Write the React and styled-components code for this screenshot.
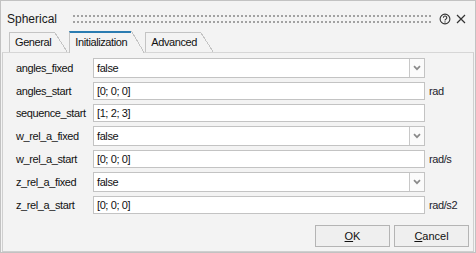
import React from 'react'
import styled, { createGlobalStyle } from 'styled-components'

const GlobalStyle = createGlobalStyle`
  html, body {
    margin: 0;
    padding: 0;
    background: #f3f3f3;
  }
  * {
    box-sizing: border-box;
  }
`

const Window = styled.div`
  width: 476px;
  height: 253px;
  border: 1px solid #c2c2c2;
  background: #f3f3f3;
  display: flex;
  flex-direction: column;
  font-family: "Liberation Sans", Arial, sans-serif;
  color: #111;
`

const TitleBar = styled.div`
  height: 30px;
  padding: 5px 9px 0 6px;
  display: flex;
  align-items: center;
`

const Title = styled.div`
  font-size: 12px;
  line-height: 14px;
  color: #1a1a1a;
`

const Gripper = styled.div`
  flex: 1;
  height: 8px;
  margin: 0 8px 0 16px;
  background-image:
    linear-gradient(to right, transparent 2px, #f3f3f3 2px),
    linear-gradient(to bottom, #a2a2a2 2px, transparent 2px);
  background-size: 4px 6px;
`

const IconButton = styled.div`
  width: ${p => p.$size}px;
  height: ${p => p.$size}px;
  margin-left: ${p => p.$gap || 0}px;
  display: flex;
  align-items: center;
  justify-content: center;
`

const TabStrip = styled.div`
  height: 22px;
  margin-bottom: -1px;
  padding-left: 8px;
  display: flex;
  align-items: flex-end;
  position: relative;
  z-index: 1;
`

const Tab = styled.div`
  position: relative;
  align-self: ${p => (p.$active ? 'stretch' : 'flex-start')};
  height: ${p => (p.$active ? 22 : 20)}px;
  margin-top: ${p => (p.$active ? 0 : 1)}px;
  padding: 2px ${p => (p.$active ? 4 : 3)}px 0 5px;
  margin-right: ${p => (p.$active ? 14 : 15)}px;
  border-left: 1px solid #c4c4c4;
  border-top: ${p => (p.$active ? '2px solid #2b7cb1' : '1px solid #c4c4c4')};
  background: #f3f3f3;
  z-index: ${p => (p.$active ? 2 : 1)};
  font-size: 11px;
  line-height: 14px;
  letter-spacing: -0.4px;
  white-space: nowrap;

  &::after {
    content: '';
    position: absolute;
    top: ${p => (p.$active ? -2 : -1)}px;
    bottom: 0;
    right: -13px;
    width: 13px;
    background: linear-gradient(
      to bottom left,
      transparent calc(50% - 0.8px),
      #c4c4c4 calc(50% - 0.8px),
      #c4c4c4 calc(50% + 0.2px),
      #f3f3f3 calc(50% + 0.2px)
    );
  }
`

const Panel = styled.div`
  flex: 1;
  margin: 0 1px;
  border: 1px solid #cfcfcf;
  border-top-color: #d6d6d6;
  display: flex;
  flex-direction: column;
  padding: 3px 4px 4px 13px;
`

const Form = styled.div`
  display: flex;
  flex-direction: column;
`

const Row = styled.div`
  display: grid;
  grid-template-columns: 77px 332px auto;
  align-items: center;
  height: ${p => (p.$tall ? 24 : 22)}px;
  font-size: 11px;
  letter-spacing: -0.4px;
`

const Label = styled.div`
  white-space: nowrap;
  color: #111;
`

const Unit = styled.div`
  padding-left: 4px;
  color: #1c1c2c;
`

const TextBox = styled.div`
  height: 18px;
  border: 1px solid #c3c3c3;
  background: #fff;
  padding-left: 3px;
  line-height: 16px;
`

const Select = styled.div`
  height: 20px;
  border: 1px solid #c3c3c3;
  background: #fff;
  display: flex;
`

const SelectValue = styled.div`
  flex: 1;
  padding-left: 3px;
  line-height: 18px;
`

const SelectArrow = styled.div`
  width: 15px;
  border-left: 1px solid #c8c8c8;
  background: #fbfbfb;
  display: flex;
  align-items: center;
  justify-content: center;
`

const Buttons = styled.div`
  margin-top: auto;
  display: flex;
  justify-content: flex-end;
  gap: 4px;
`

const Button = styled.div`
  width: 75px;
  height: 22px;
  border: 1px solid #b4b4b4;
  background: #efefef;
  font-size: 11px;
  line-height: 20px;
  text-align: center;
  color: #111;

  u {
    text-decoration: underline;
    text-underline-offset: 1px;
  }
`

const Chevron = () => (
  <svg width="8" height="6" viewBox="0 0 8 6">
    <path d="M1 1.2 L4 4.2 L7 1.2" fill="none" stroke="#8a8a8a" strokeWidth="1.7" />
  </svg>
)

const HelpIcon = () => (
  <svg width="12" height="12" viewBox="0 0 12 12">
    <circle cx="6" cy="6" r="4.9" fill="none" stroke="#333" strokeWidth="1.1" />
    <path d="M4.4 4.8 a1.7 1.7 0 1 1 2.4 1.5 c-0.6 0.3 -0.8 0.6 -0.8 1.3" fill="none" stroke="#333" strokeWidth="1.1" />
    <circle cx="6" cy="8.9" r="0.7" fill="#333" />
  </svg>
)

const CloseIcon = () => (
  <svg width="10" height="10" viewBox="0 0 10 10">
    <path d="M1 1 L9 9 M9 1 L1 9" stroke="#333" strokeWidth="1.2" />
  </svg>
)

const rows = [
  { name: 'angles_fixed', value: 'false', select: true },
  { name: 'angles_start', value: '[0; 0; 0]', unit: 'rad' },
  { name: 'sequence_start', value: '[1; 2; 3]' },
  { name: 'w_rel_a_fixed', value: 'false', select: true },
  { name: 'w_rel_a_start', value: '[0; 0; 0]', unit: 'rad/s' },
  { name: 'z_rel_a_fixed', value: 'false', select: true },
  { name: 'z_rel_a_start', value: '[0; 0; 0]', unit: 'rad/s2' },
]

export default function App() {
  return (
    <>
      <GlobalStyle />
      <Window>
        <TitleBar>
          <Title>Spherical</Title>
          <Gripper />
          <IconButton $size={12}><HelpIcon /></IconButton>
          <IconButton $size={10} $gap={5}><CloseIcon /></IconButton>
        </TitleBar>
        <TabStrip>
          <Tab>General</Tab>
          <Tab $active>Initialization</Tab>
          <Tab>Advanced</Tab>
        </TabStrip>
        <Panel>
          <Form>
            {rows.map(r => (
              <Row key={r.name} $tall={r.select}>
                <Label>{r.name}</Label>
                {r.select ? (
                  <Select>
                    <SelectValue>{r.value}</SelectValue>
                    <SelectArrow><Chevron /></SelectArrow>
                  </Select>
                ) : (
                  <TextBox>{r.value}</TextBox>
                )}
                {r.unit && <Unit>{r.unit}</Unit>}
              </Row>
            ))}
          </Form>
          <Buttons>
            <Button><u>O</u>K</Button>
            <Button><u>C</u>ancel</Button>
          </Buttons>
        </Panel>
      </Window>
    </>
  )
}
